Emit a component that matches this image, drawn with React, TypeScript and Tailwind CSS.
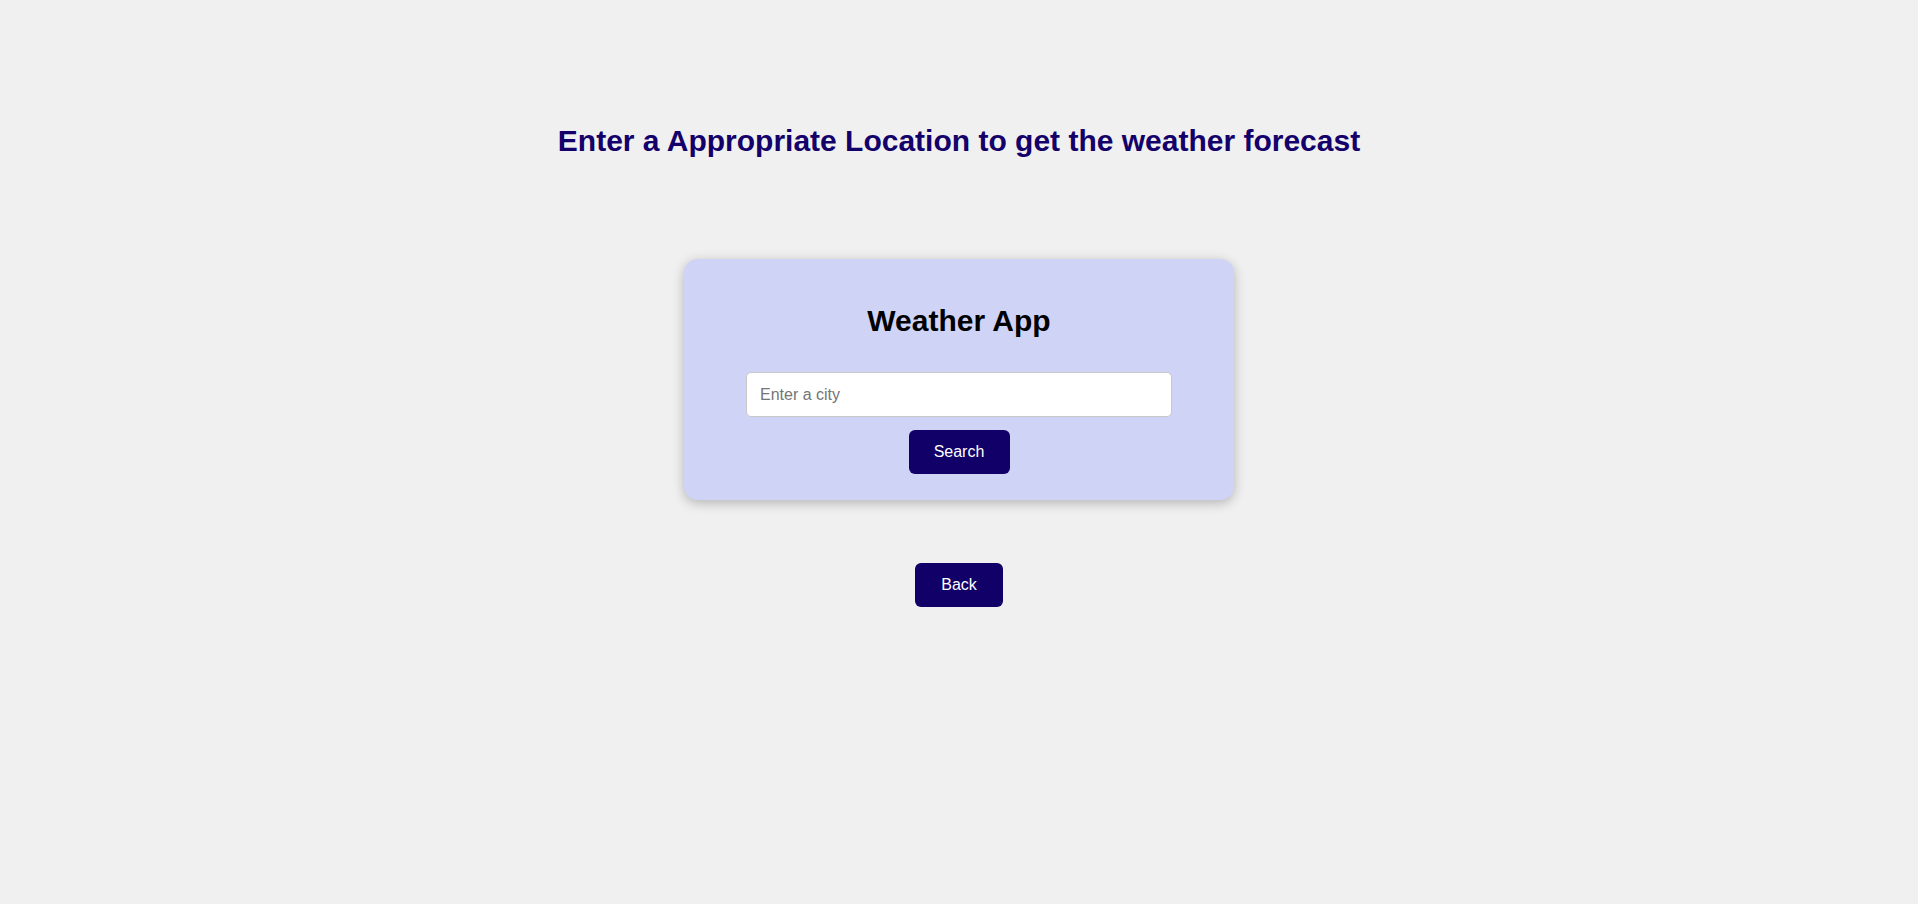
import { useState } from "react";

function WeatherCard() {
  const [city, setCity] = useState("");

  return (
    <div className="w-[550px] h-[241px] rounded-[14px] bg-[#cfd4f7] shadow-[0_3px_12px_rgba(0,0,0,0.25)] flex flex-col items-center pt-[45px]">
      <h2 className="text-[30px] leading-[34px] font-bold text-black">
        Weather App
      </h2>
      <input
        type="text"
        placeholder="Enter a city"
        value={city}
        onChange={(e) => setCity(e.target.value)}
        className="mt-[34px] w-[426px] h-[45px] px-[13px] rounded-[5px] border border-[#c8c8c8] bg-white text-[16px] text-black placeholder:text-[#757575] outline-none"
      />
      <button className="mt-[13px] w-[101px] h-[44px] rounded-[6px] bg-[#100068] text-white text-[16px]">
        Search
      </button>
    </div>
  );
}

export default function App() {
  return (
    <div className="min-h-[904px] w-full bg-[#f0f0f0] flex flex-col items-center pt-[124px] font-['Liberation_Sans',Arial,sans-serif]">
      <h1 className="text-[30px] leading-[34px] font-bold text-[#14006a]">
        Enter a Appropriate Location to get the weather forecast
      </h1>
      <div className="mt-[101px]">
        <WeatherCard />
      </div>
      <button className="mt-[63px] w-[88px] h-[44px] rounded-[6px] bg-[#100068] text-white text-[16px]">
        Back
      </button>
    </div>
  );
}
